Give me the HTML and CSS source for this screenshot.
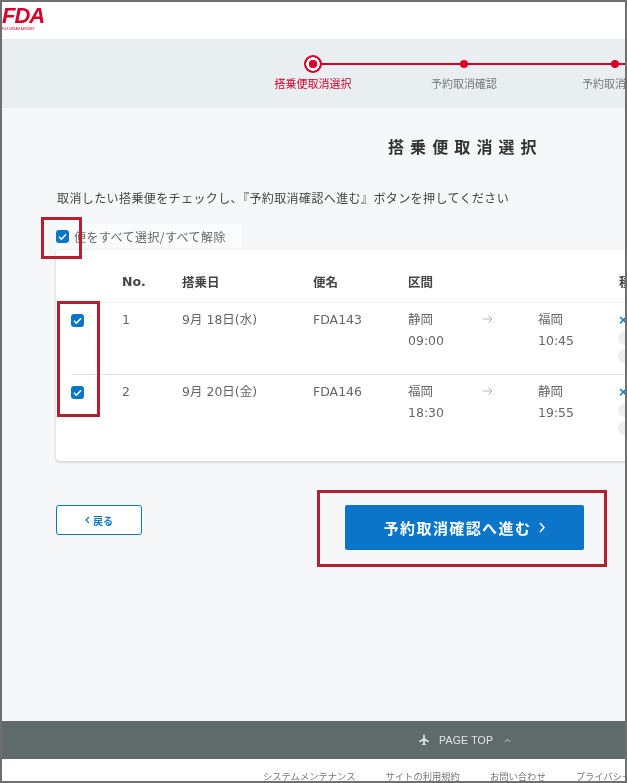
FILE: index.html
```html
<!DOCTYPE html>
<html lang="ja">
<head>
    <meta charset="UTF-8">
    <meta name="viewport" content="width=device-width, initial-scale=1.0">
    <title>搭乗便取消選択</title>
    <link rel="stylesheet" href="styles.css">
</head>
<body>
    <div class="page">
        <header class="header">
            <div class="logo">
                <span class="logo-name">FDA</span>
                <span class="logo-sub">FUJI DREAM AIRLINES</span>
            </div>
        </header>

        <div class="stepper">
            <div class="step current">
                <span class="dot"></span>
                <span class="step-label">搭乗便取消選択</span>
            </div>
            <div class="step">
                <span class="dot"></span>
                <span class="step-label">予約取消確認</span>
            </div>
            <div class="step">
                <span class="dot"></span>
                <span class="step-label">予約取消完了</span>
            </div>
        </div>

        <main class="main">
            <h1 class="title">搭乗便取消選択</h1>
            <p class="lead">取消したい搭乗便をチェックし、『予約取消確認へ進む』ボタンを押してください</p>

            <label class="select-all">
                <span class="check"><svg viewBox="0 0 13 13"><path d="M3 6.8l2.4 2.4L10 4.2"/></svg></span>
                <span>便をすべて選択/すべて解除</span>
            </label>

            <div class="card">
                <div class="row head">
                    <span></span>
                    <span>No.</span>
                    <span>搭乗日</span>
                    <span>便名</span>
                    <span>区間</span>
                    <span></span>
                    <span></span>
                    <span>種別</span>
                </div>
                <div class="row flight">
                    <span class="check"><svg viewBox="0 0 13 13"><path d="M3 6.8l2.4 2.4L10 4.2"/></svg></span>
                    <span>1</span>
                    <span>9月 18日(水)</span>
                    <span>FDA143</span>
                    <span class="place">静岡<br>09:00</span>
                    <svg class="arrow" viewBox="0 0 10 10"><path d="M0 5h9M5.500 1.500L9 5l-3.500 3.500"/></svg>
                    <span class="place">福岡<br>10:45</span>
                    <span class="fare">
                        <span class="fare-name">×</span>
                        <span class="pill"></span>
                        <span class="pill"></span>
                    </span>
                </div>
                <div class="row flight last">
                    <span class="check"><svg viewBox="0 0 13 13"><path d="M3 6.8l2.4 2.4L10 4.2"/></svg></span>
                    <span>2</span>
                    <span>9月 20日(金)</span>
                    <span>FDA146</span>
                    <span class="place">福岡<br>18:30</span>
                    <svg class="arrow" viewBox="0 0 10 10"><path d="M0 5h9M5.500 1.500L9 5l-3.500 3.500"/></svg>
                    <span class="place">静岡<br>19:55</span>
                    <span class="fare">
                        <span class="fare-name">×</span>
                        <span class="pill"></span>
                        <span class="pill"></span>
                    </span>
                </div>
            </div>

            <div class="buttons">
                <a class="btn-back" href="#">
                    <svg class="chev-back" viewBox="0 0 5 8"><path d="M4 1L1 4l3 3"/></svg>
                    <span>戻る</span>
                </a>
                <a class="btn-next" href="#">
                    <span>予約取消確認へ進む</span>
                    <svg class="chev-next" viewBox="0 0 6 11"><path d="M1 1l4 4.500-4 4.500"/></svg>
                </a>
            </div>
        </main>

        <div class="page-top">
            <svg class="plane" viewBox="0 0 14 16"><path d="M7 0c.8 0 1.200 1 1.200 2.500V6L14 9.500V11L8.200 9.300V13l1.800 1.300V15.500L7 14.800 4 15.500V14.300L5.800 13V9.300L0 11V9.500L5.800 6V2.500C5.800 1 6.200 0 7 0z"/></svg>
            <span>PAGE TOP</span>
            <svg class="caret" viewBox="0 0 8 5"><path d="M1 4l3-3 3 3"/></svg>
        </div>

        <footer class="footer">
            <a href="#">システムメンテナンス</a>
            <a href="#">サイトの利用規約</a>
            <a href="#">お問い合わせ</a>
            <a href="#">プライバシーポリシー</a>
        </footer>

        <!-- red boxes drawn over the screenshot -->
        <span class="mark mark-all"></span>
        <span class="mark mark-rows"></span>
        <span class="mark mark-next"></span>
    </div>
</body>
</html>
```

FILE: styles.css
```css
* {
    box-sizing: border-box;
}
html, body {
    margin: 0;
    padding: 0;
}
body {
    font-family: "Noto Sans CJK JP", "Noto Sans", sans-serif;
    color: #555;
    background-color: #fff;
}
a {
    text-decoration: none;
}
.page {
    position: relative;
    width: 627px;
    height: 783px;
    display: flex;
    flex-direction: column;
    overflow: hidden;
    border: 2px solid #6f6f6f;
    background-color: #fff;
    filter: blur(0.5px);
}
.header {
    height: 37px;
    flex: none;
}
.logo {
    display: flex;
    flex-direction: column;
    width: 44px;
    color: #d6002a;
}
.logo-name {
    font-family: "Liberation Sans", sans-serif;
    font-size: 22px;
    font-weight: bold;
    font-style: italic;
    line-height: 22px;
    margin-top: 3px;
    letter-spacing: -1px;
}
.logo-sub {
    font-family: "Liberation Sans", sans-serif;
    font-size: 3px;
    line-height: 4px;
    white-space: nowrap;
}
.stepper {
    height: 69px;
    flex: none;
    display: flex;
    padding: 16px 0 0 235.500px;
    background-color: #e9eff1;
}
.step {
    position: relative;
    flex: none;
    width: 151px;
    display: flex;
    flex-direction: column;
    align-items: center;
}
.step::after {
    content: "";
    position: absolute;
    top: 8px;
    left: 50%;
    width: 151px;
    height: 2px;
    background-color: #d6002a;
}
.dot {
    position: relative;
    z-index: 1;
    width: 8px;
    height: 8px;
    margin: 5px 0;
    border-radius: 50%;
    background-color: #d6002a;
}
.step.current .dot {
    width: 18px;
    height: 18px;
    margin: 0;
    background: radial-gradient(circle, #d6002a 0 4px, #fff 4.500px 6.500px, #d6002a 7px);
}
.step-label {
    margin-top: 2px;
    font-size: 11px;
    line-height: 16px;
    white-space: nowrap;
    color: #777;
}
.step.current .step-label {
    color: #d6002a;
}
.main {
    flex: 1;
    min-height: 0;
    padding: 26px 0 0 54px;
    background-color: #f5f7f9;
}
.title {
    margin: 0 0 0 332px;
    font-size: 16px;
    line-height: 24px;
    font-weight: bold;
    letter-spacing: 6.100px;
    color: #333;
    white-space: nowrap;
}
.lead {
    margin: 31px 0 0 1px;
    font-size: 12px;
    line-height: 18px;
    letter-spacing: 0.400px;
    white-space: nowrap;
    color: #444;
}
.select-all {
    display: flex;
    align-items: center;
    gap: 5px;
    width: 186px;
    height: 24px;
    margin-top: 17px;
    font-size: 12px;
    letter-spacing: 0.450px;
    color: #666;
    background-color: #fafbfc;
}
.check {
    flex: none;
    width: 13px;
    height: 13px;
    border-radius: 3px;
    background-color: #0b76c9;
}
.check svg {
    display: block;
    fill: none;
    stroke: #fff;
    stroke-width: 1.500;
}
.card {
    width: 640px;
    height: 211px;
    margin-top: 2px;
    border-radius: 4px;
    background-color: #fff;
    box-shadow: 0 1px 3px rgba(0, 0, 0, 0.2);
}
.row {
    display: grid;
    grid-template-columns: 51px 60px 131px 95px 79px 51px 81px 60px;
    padding-left: 15px;
    font-family: "DejaVu Sans", "Noto Sans CJK JP", sans-serif;
    font-size: 12.500px;
    white-space: nowrap;
}
.head {
    height: 53px;
    padding-top: 11px;
    align-items: center;
    font-weight: bold;
    color: #444;
    border-bottom: 1px solid #eef0f2;
}
.flight {
    position: relative;
    height: 72px;
    padding-top: 10px;
    line-height: 14px;
    color: #666;
}
.flight::after {
    content: "";
    position: absolute;
    left: 15px;
    right: 0;
    bottom: 0;
    height: 1px;
    background-color: #e3e6e8;
}
.flight.last::after {
    display: none;
}
.flight .check {
    margin-top: 1px;
}
.place {
    line-height: 21px;
    margin-top: -4px;
}
.arrow {
    width: 10px;
    height: 10px;
    margin-top: 1px;
    margin-left: -4px;
    fill: none;
    stroke: #b5b5b5;
}
.fare {
    display: flex;
    flex-direction: column;
    align-items: flex-start;
    gap: 4px;
    margin-left: -1px;
}
.fare-name {
    color: #0b76c9;
    font-weight: bold;
    line-height: 14px;
}
.pill {
    width: 40px;
    height: 14px;
    border-radius: 7px;
    background-color: #eee;
}
.buttons {
    display: flex;
    align-items: flex-start;
    margin-top: 44px;
}
.btn-back {
    width: 86px;
    height: 30px;
    display: flex;
    align-items: center;
    justify-content: center;
    gap: 3px;
    font-size: 10px;
    font-weight: bold;
    color: #0b76c9;
    background-color: #fff;
    border: 1px solid #0b76c9;
    border-radius: 3px;
}
.chev-back {
    width: 5px;
    height: 8px;
    fill: none;
    stroke: #0b76c9;
    stroke-width: 1.200;
}
.btn-next {
    width: 239px;
    height: 45px;
    margin-left: 203px;
    display: flex;
    align-items: center;
    justify-content: center;
    gap: 8px;
    font-size: 15px;
    font-weight: bold;
    letter-spacing: 1.400px;
    color: #fff;
    background-color: #0b76c9;
    border-radius: 2px;
}
.chev-next {
    width: 6px;
    height: 11px;
    fill: none;
    stroke: #fff;
    stroke-width: 1.500;
}
.page-top {
    height: 38px;
    flex: none;
    display: flex;
    align-items: center;
    padding-left: 417px;
    font-family: "Liberation Sans", sans-serif;
    font-size: 10.500px;
    letter-spacing: 0.200px;
    color: #e4e8e8;
    background-color: #5f6a6b;
}
.plane {
    width: 10px;
    height: 12px;
    margin-right: 10px;
    fill: #dfe4e4;
}
.caret {
    width: 7px;
    height: 5px;
    margin-left: 11px;
    fill: none;
    stroke: #dfe4e4;
}
.footer {
    height: 22px;
    flex: none;
    display: flex;
    gap: 30px;
    padding: 10px 0 0 261px;
    font-size: 9.300px;
    line-height: 14px;
    white-space: nowrap;
}
.footer a {
    color: #777;
}
.mark {
    position: absolute;
    border: 3px solid #b5202e;
}
.mark-all {
    left: 39px;
    top: 215px;
    width: 41px;
    height: 42px;
}
.mark-rows {
    left: 55px;
    top: 299px;
    width: 43px;
    height: 116px;
}
.mark-next {
    left: 315px;
    top: 488px;
    width: 290px;
    height: 77px;
}
```
